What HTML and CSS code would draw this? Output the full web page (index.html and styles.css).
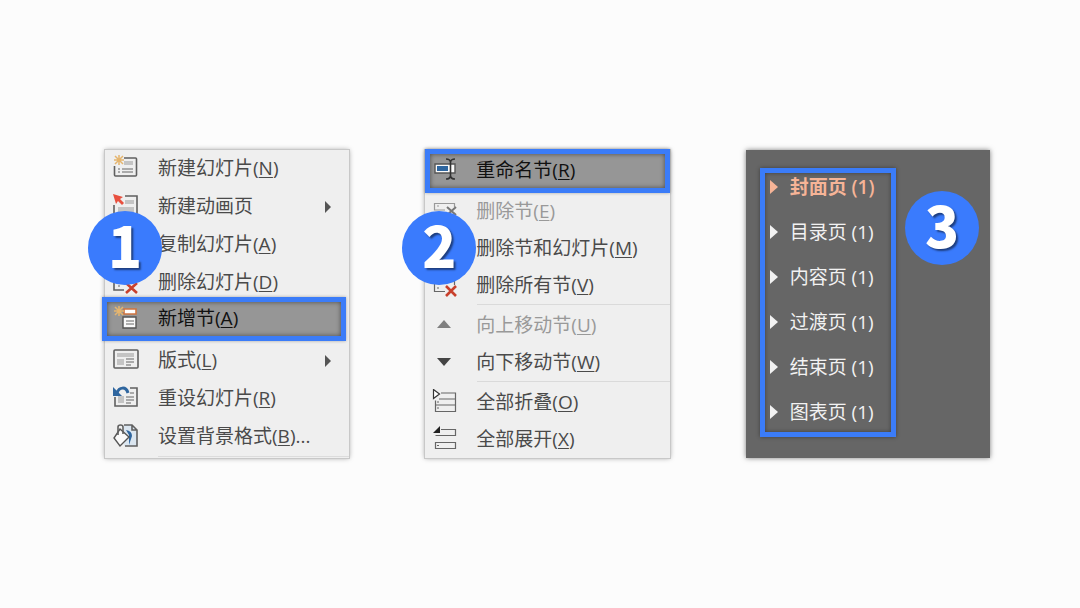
FILE: index.html
```html
<!DOCTYPE html>
<html lang="zh-CN">
<head>
  <meta charset="UTF-8">
  <meta name="viewport" content="width=device-width, initial-scale=1.0">
  <title>新增节</title>
  <link rel="stylesheet" href="styles.css">
</head>
<body>
  <main class="steps">

    <!-- step 1: slide context menu -->
    <section class="panel">
      <ul class="menu">
        <li><button class="item">
          <svg class="icon" viewBox="0 0 28 28"><path class="line bold" d="M12 3h11.500q1 0 1 1v16q0 1-1 1h-20q-1 0-1-1V11"/><path class="fill-soft" d="M12 6h9v4h-9z"/><path class="line" d="M6 14h2M10 14h11M6 17h2M10 17h11"/><path class="burst" d="M7 0v10M2 5h10M3 1l8 8M11 1l-8 8"/></svg>
          <span>新建幻灯片(<u>N</u>)</span></button></li>
        <li><button class="item">
          <svg class="icon" viewBox="0 0 28 28"><path class="line bold" d="M13 3h12v19H2V12"/><path class="fill-soft" d="M13 7h9v4h-9zM6 14h16v8H6z"/><path class="red" d="M1 1l10 3-3 2 4 4-2 2-4-4-2 3z"/></svg>
          <span>新建动画页</span><i class="arrow"></i></button></li>
        <li><button class="item">
          <svg class="icon" viewBox="0 0 28 28"><path class="line bold" d="M3 3h16v13H3zM8 17v5h16V8h-4"/></svg>
          <span>复制幻灯片(<u>A</u>)</span></button></li>
        <li><button class="item">
          <svg class="icon" viewBox="0 0 28 28"><path class="line bold" d="M12 21H2V3h22v10"/><path class="line" d="M6 17h2"/><path class="cross" d="M14 14l11 10M25 14L14 24"/></svg>
          <span>删除幻灯片(<u>D</u>)</span></button></li>
        <li><button class="item picked offset">
          <svg class="icon" viewBox="0 0 28 28"><path class="orange" d="M12 4h12v5H12z"/><path class="paper" d="M11 12h13v11H11z"/><path class="line" d="M14 16h8M14 19h8"/><path class="burst" d="M7 1v10M2 6h10M3 2l8 8M11 2l-8 8"/></svg>
          <span>新增节(<u>A</u>)</span></button></li>
        <li><button class="item">
          <svg class="icon" viewBox="0 0 28 28"><rect class="line bold" x="2" y="3" width="24" height="18" rx="1"/><path class="fill-soft" d="M5 6h17v4H5zM5 12h7v6H5z"/><path class="line" d="M14 12h8M14 15h8M14 18h5"/></svg>
          <span>版式(<u>L</u>)</span><i class="arrow"></i></button></li>
        <li><button class="item">
          <svg class="icon" viewBox="0 0 28 28"><path class="line bold" d="M18 3h7v18H3v-9"/><path class="fill-soft" d="M6 11h6v7H6z"/><path class="line" d="M18 8h4M14 12h8M14 15h8M14 18h5"/><path class="blue-line" d="M5 8C7 2 14 1 16 8"/><path class="blue" d="M1 2v9h9z"/></svg>
          <span>重设幻灯片(<u>R</u>)</span></button></li>
        <li><button class="item">
          <svg class="icon" viewBox="0 0 28 28"><path class="pale" d="M12 2h8l5 5v16H12z"/><path class="line bold" d="M12 2h8l5 5v16H13M20 2v5h5"/><path class="blue" d="M14 7q6 1 6 6l-3 9V12z"/><path class="paper" d="M8 6l9 8-9 9-6-8z"/><path class="line bold" d="M6 12V4q0-2 2.500-2T11 4v7"/></svg>
          <span>设置背景格式(<u>B</u>)...</span></button></li>
      </ul>
      <hr class="end-line">
      <span class="badge left">1</span>
    </section>

    <!-- step 2: section context menu -->
    <section class="panel">
      <ul class="menu compact">
        <li><button class="item picked">
          <svg class="icon" viewBox="0 0 28 28"><path class="paper" d="M3 7h20v9H3z"/><path class="blue" d="M5 9h11v5H5z"/><path class="caret" d="M14 2q4 0 4.500 3Q19 2 23 2M18.500 5v15M14 22q4 0 4.500-3 .5 3 4.500 3"/></svg>
          <span>重命名节(<u>R</u>)</span></button></li>
        <li><button class="item" disabled>
          <svg class="icon" viewBox="0 0 28 28"><path class="line" d="M13 12H2.500V5.500h20V9M5 8h2"/><path class="cross" d="M15 9l9 8M24 9l-9 8"/></svg>
          <span>删除节(<u>E</u>)</span></button></li>
        <li><button class="item">
          <svg class="icon" viewBox="0 0 28 28"><path class="line" d="M2.500 5.500h20v14h-20z"/></svg>
          <span>删除节和幻灯片(<u>M</u>)</span></button></li>
        <li><button class="item">
          <svg class="icon" viewBox="0 0 28 28"><path class="line" d="M13 19.500H2.500v-14h20V13M5 16h2"/><path class="cross" d="M14 14l10 10M24 14L14 24"/></svg>
          <span>删除所有节(<u>V</u>)</span></button></li>
        <li class="line-above"><button class="item" disabled>
          <svg class="icon" viewBox="0 0 28 28"><path class="dim" d="M5 16l7-8 7 8z"/></svg>
          <span>向上移动节(<u>U</u>)</span></button></li>
        <li><button class="item">
          <svg class="icon" viewBox="0 0 28 28"><path class="dark" d="M5 9h14l-7 8z"/></svg>
          <span>向下移动节(<u>W</u>)</span></button></li>
        <li class="line-above"><button class="item">
          <svg class="icon" viewBox="0 0 28 28"><path class="line" d="M9 4h14.500v18.500h-20v-11M7 10h16M4 16h19M5 13h2M5 19h2"/><path class="caret thin" d="M1.500 0.500v9l6-4.500z"/></svg>
          <span>全部折叠(<u>O</u>)</span></button></li>
        <li><button class="item">
          <svg class="icon" viewBox="0 0 28 28"><path class="line" d="M9 3.500h14.500v6h-20M3.500 16.500h20v6h-20zM5 19.500h2"/><path class="black" d="M8 0v7H1z"/></svg>
          <span>全部展开(<u>X</u>)</span></button></li>
      </ul>
      <span class="badge mid">2</span>
    </section>

    <!-- step 3: finished section list -->
    <section class="panel dark-panel">
      <ul class="sections">
        <li class="current">封面页 (1)</li>
        <li>目录页 (1)</li>
        <li>内容页 (1)</li>
        <li>过渡页 (1)</li>
        <li>结束页 (1)</li>
        <li>图表页 (1)</li>
      </ul>
      <span class="badge right">3</span>
    </section>

  </main>
</body>
</html>
```

FILE: styles.css
```css
* {
  box-sizing: border-box;
}

body {
  margin: 0;
  background: #fcfcfc;
  font-family: "Open Sans", "Noto Sans CJK SC", sans-serif;
}

/* three panels side by side */
.steps {
  min-height: 100vh;
  display: grid;
  grid-template-columns: repeat(3, 1fr);
  align-content: center;
  gap: 76px;
  padding: 0 90px 0 105px;
}

.panel {
  position: relative;
  background: #efefef;
  box-shadow: 0 0 0 1px #c8c8c8, 0 0 5px rgba(0, 0, 0, 0.4);
}

.menu,
.sections {
  list-style: none;
  margin: 0;
  padding: 0;
}

.item {
  display: flex;
  align-items: center;
  gap: 18px;
  width: 100%;
  height: 38px;
  padding: 0 18px 0 7px;
  border: none;
  background: none;
  color: #4a4a4a;
  font-family: inherit;
  font-size: 19px;
  line-height: 28px;
  text-align: left;
  white-space: nowrap;
}

.item span {
  padding-bottom: 2px;
}

.item u {
  text-decoration-thickness: 1px;
  text-underline-offset: 2px;
}

.compact .item {
  gap: 16px;
  height: 37px;
}

.item:disabled {
  color: #999;
}

/* highlighted entry with the blue frame */
.item.picked,
.compact .item.picked {
  height: 44px;
  padding-left: 2px;
  border: 5px solid #3b7cf8;
  background: #969696;
  box-shadow: inset 0 0 5px rgba(0, 0, 0, 0.5), 0 0 3px rgba(0, 0, 0, 0.3);
  color: #111;
}

.compact .item.picked {
  margin-top: -1px;
}

.item.picked.offset {
  margin: -5px 0 1px -3px;
  padding-left: 5px;
}

.arrow {
  margin-left: auto;
  border-left: 6px solid #555;
  border-top: 6px solid transparent;
  border-bottom: 6px solid transparent;
}

.end-line {
  height: 1px;
  margin: 0 0 1px 53px;
  border: none;
  background: #dcdcdc;
}

.line-above::before {
  content: "";
  display: block;
  height: 1px;
  margin: 0 0 2px 52px;
  background: #dadada;
}

/* icons */
.icon {
  flex: none;
  width: 28px;
  height: 28px;
  fill: none;
}

.line { stroke: #666; stroke-width: 1.2; }
.line.bold { stroke: #606060; stroke-width: 1.6; }
.fill-soft { fill: #c4c4c4; }
.burst { stroke: #e5b56e; stroke-width: 1.5; }
.red { fill: #e8503f; }
.cross { stroke: #c8402c; stroke-width: 2.6; }
.orange { fill: #fff; stroke: #cf7440; stroke-width: 1.6; }
.paper { fill: #fafafa; stroke: #555; stroke-width: 1.4; }
.pale { fill: #dbe6f0; }
.blue { fill: #2f669f; }
.blue-line { stroke: #2f669f; stroke-width: 3; }
.caret { stroke: #333; stroke-width: 1.6; }
.caret.thin { fill: #fff; stroke-width: 1.2; }
.dim { fill: #808080; }
.dark { fill: #444; }
.black { fill: #222; }

.item:disabled .line { stroke: #999; }
.item:disabled .cross { stroke: #777; stroke-width: 2; }

/* dark section list */
.dark-panel {
  padding: 18px 14px;
  background: #666;
  box-shadow: 0 0 5px rgba(0, 0, 0, 0.5);
}

.sections {
  display: grid;
  gap: 17px;
  width: 136px;
  padding: 0 0 6px 5px;
  border: 5px solid #3b7cf8;
  box-shadow: 0 0 4px rgba(0, 0, 0, 0.4), inset 0 0 4px rgba(0, 0, 0, 0.4);
}

.sections li {
  display: flex;
  align-items: center;
  gap: 12px;
  color: #f2f2f2;
  font-size: 19px;
  line-height: 28px;
  white-space: nowrap;
}

.sections li::before {
  content: "";
  border-left: 8px solid currentColor;
  border-top: 7px solid transparent;
  border-bottom: 7px solid transparent;
}

.sections .current {
  color: #f6b497;
  font-weight: 600;
}

/* numbered circles over the panels */
.badge {
  position: absolute;
  top: 61px;
  width: 74px;
  height: 74px;
  border-radius: 50%;
  background: #3a7bfd;
  color: #fff;
  font: 900 56px/66px "Noto Sans CJK SC", sans-serif;
  text-align: center;
  text-shadow: 2px 2px 2px rgba(0, 0, 0, 0.5);
}

.badge.left { left: -17px; }
.badge.mid { left: -23px; }

.badge.right {
  top: 41px;
  right: 11px;
}
```
